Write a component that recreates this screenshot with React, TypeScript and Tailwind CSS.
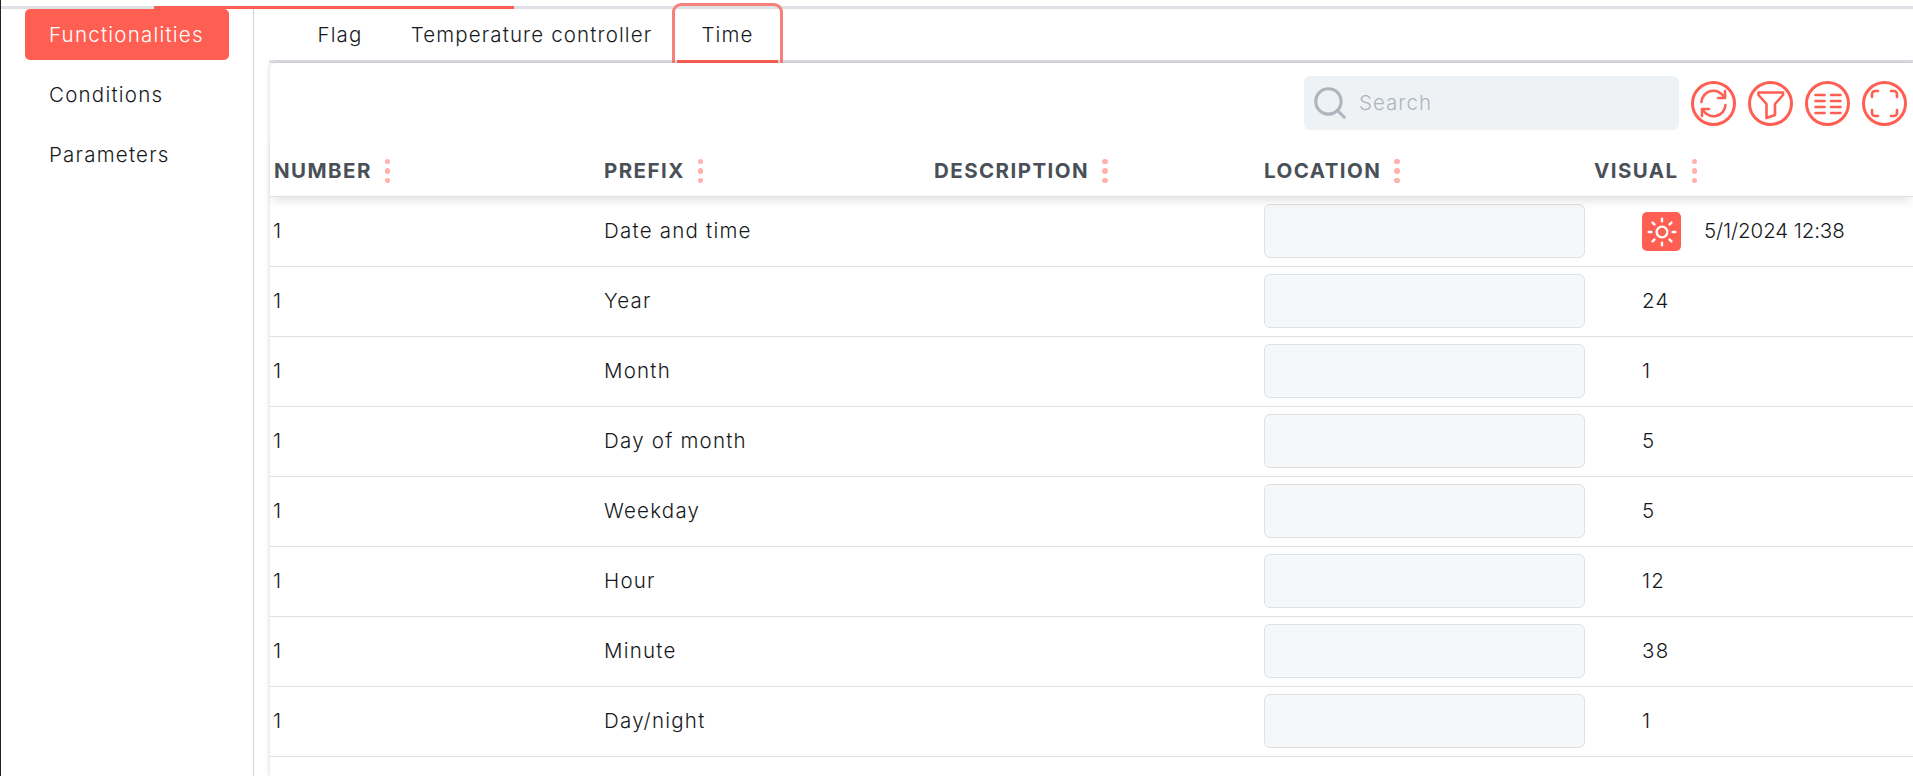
import { Search, Sun } from "lucide-react";

const rows = [
  { prefix: "Date and time", value: "5/1/2024 12:38", sun: true },
  { prefix: "Year", value: "24" },
  { prefix: "Month", value: "1" },
  { prefix: "Day of month", value: "5" },
  { prefix: "Weekday", value: "5" },
  { prefix: "Hour", value: "12" },
  { prefix: "Minute", value: "38" },
  { prefix: "Day/night", value: "1" },
];

const columns = ["NUMBER", "PREFIX", "DESCRIPTION", "LOCATION", "VISUAL"];
const gridCols = "grid grid-cols-[330px_330px_330px_330px_330px]";

function Dots() {
  return (
    <span className="ml-[13px] flex flex-col gap-[4px]">
      <span className="h-[5.5px] w-[5.5px] rounded-full bg-[#ffb1ac]"></span>
      <span className="h-[5.5px] w-[5.5px] rounded-full bg-[#ffb1ac]"></span>
      <span className="h-[5.5px] w-[5.5px] rounded-full bg-[#ffb1ac]"></span>
    </span>
  );
}

function CircleIcon({ children }: { children: React.ReactNode }) {
  return (
    <button className="h-[45px] w-[45px] shrink-0">
      <svg
        width="45"
        height="45"
        viewBox="0 0 45 45"
        fill="none"
        stroke="#ff5f52"
        strokeWidth="2.6"
        strokeLinecap="round"
        strokeLinejoin="round"
      >
        <circle cx="22.5" cy="22.5" r="21" strokeWidth="3" />
        {children}
      </svg>
    </button>
  );
}

export default function App() {
  return (
    <div className="flex h-screen flex-col overflow-hidden border-l border-[#222] bg-white pt-[6px] font-['Inter',sans-serif] font-[350] text-[#16191c]">
      <div className="flex h-[3px] shrink-0 bg-[#dee2e6]">
        <div className="ml-[153px] w-[360px] bg-[#ff5f52]"></div>
      </div>

      <div className="flex flex-1">
        <div className="flex w-[253px] shrink-0 flex-col gap-[9px] border-r border-[#cfd2d5] pl-[24px] text-[20.5px] tracking-[0.06em]">
          <div className="flex h-[51px] w-[204px] items-center rounded-[5px] bg-[#ff5f52] pt-[2px] pl-[24px] text-white">Functionalities</div>
          <div className="flex h-[51px] w-[204px] items-center pt-[2px] pl-[24px]">Conditions</div>
          <div className="flex h-[51px] w-[204px] items-center pt-[2px] pl-[24px]">Parameters</div>
        </div>

        <div className="flex min-w-0 flex-1 flex-col pl-[15px]">
          <div className="flex h-[54px] shrink-0 border-b-[3px] border-[#dee2e6] pl-[25px] text-[20.5px] tracking-[0.055em]">
            <div className="flex w-[92px] items-center justify-center pt-[2px]">Flag</div>
            <div className="flex w-[291px] items-center justify-center pt-[2px]">Temperature controller</div>
            <div className="relative -mb-[3px] flex w-[101px] items-center justify-center border-b-[3px] border-[#ff5f52] pt-[2px]">
              Time
              <span className="absolute -top-[6px] -right-[5px] -bottom-[3px] -left-[5px] rounded-t-[9px] border-[3px] border-b-0 border-[#f5827a]"></span>
            </div>
          </div>

          <div className="relative ml-px flex-1 rounded-tl-[6px] bg-white shadow-[0_0_5px_rgba(0,0,0,0.18)]">
            <div className="flex items-center justify-end gap-[12px] pt-[13px] pr-[6px]">
              <div className="flex h-[54px] w-[375px] items-center gap-[10px] rounded-[6px] bg-[#eff2f5] pl-[7px] text-[20.5px] tracking-[0.05em] text-[#adb5bd]">
                <Search size={38} strokeWidth={2} color="#adb5bd" />
                <span className="pt-[1px]">Search</span>
              </div>
              <div className="flex gap-[12px]">
                <CircleIcon>
                  <path d="M10.5 21A12 12 0 0 1 33 16" />
                  <path d="M34 10v7h-7" />
                  <path d="M34.5 24A12 12 0 0 1 12 29" />
                  <path d="M11 35v-7h7" />
                </CircleIcon>
                <CircleIcon>
                  <path d="M10.5 11.5H35V14l-8 9v11l-8.5 3V23l-8-9Z" />
                </CircleIcon>
                <CircleIcon>
                  <path d="M10.5 14h9M26 14h9.5M10.5 20h9M26 20h9.5M10.5 26h9M26 26h9.5M10.5 32h9M26 32h9.5" />
                </CircleIcon>
                <CircleIcon>
                  <path d="M10 16v-3a3 3 0 0 1 3-3h3M29 10h3a3 3 0 0 1 3 3v3M35 29v3a3 3 0 0 1-3 3h-3M16 35h-3a3 3 0 0 1-3-3v-3" />
                </CircleIcon>
              </div>
            </div>

            <div className={`${gridCols} relative h-[67px] items-center border-b border-[#dee2e6] pt-[16px] shadow-[0_7px_9px_-3px_rgba(0,0,0,0.11)]`}>
              {columns.map((c) => (
                <div key={c} className="flex items-center pl-[4px] text-[20.5px] font-bold tracking-[0.07em] text-[#495057]">
                  {c}
                  <Dots />
                </div>
              ))}
            </div>

            {rows.map((r) => (
              <div key={r.prefix} className={`${gridCols} h-[70px] items-center border-b border-[#dee2e6] text-[20.5px] tracking-[0.06em]`}>
                <div className="pl-[3px]">1</div>
                <div className="pl-[4px]">{r.prefix}</div>
                <div></div>
                <div className="mb-[1px] pl-[4px]">
                  <div className="h-[54px] w-[321px] rounded-[6px] border border-[#dee2e6] bg-[#f6f7f9]"></div>
                </div>
                <div className="flex items-center pl-[52px]">
                  {r.sun && (
                    <span className="mr-[23px] flex h-[39px] w-[39px] items-center justify-center rounded-[5px] bg-[#ff5f52]">
                      <Sun size={32} color="white" strokeWidth={1.8} />
                    </span>
                  )}
                  <span className={r.sun ? "tracking-[-0.005em]" : ""}>{r.value}</span>
                </div>
              </div>
            ))}
          </div>
        </div>
      </div>
    </div>
  );
}
